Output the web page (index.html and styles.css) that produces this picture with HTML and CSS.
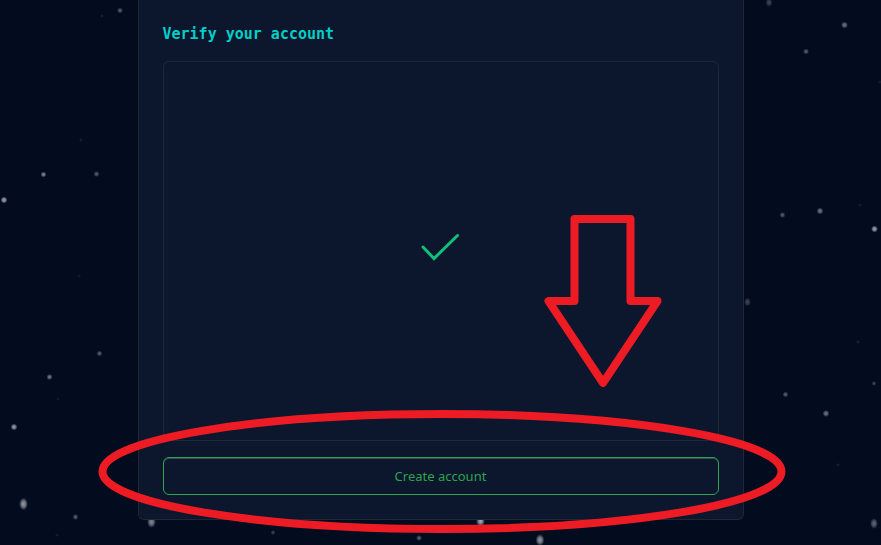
FILE: index.html
```html
<!DOCTYPE html>
<html lang="en">
<head>
<meta charset="utf-8">
<meta name="viewport" content="width=device-width, initial-scale=1">
<title>Verify your account</title>
<link rel="stylesheet" href="styles.css">
</head>
<body>
<main class="stage">
  <svg class="stars" viewBox="0 0 881 545" preserveAspectRatio="xMidYMin slice" aria-hidden="true">
    <defs>
      <radialGradient id="star">
        <stop offset="0" stop-color="#b4b7bd"/>
        <stop offset=".5" stop-color="#a0a4ac" stop-opacity=".75"/>
        <stop offset="1" stop-color="#8a8e98" stop-opacity="0"/>
      </radialGradient>
    </defs>
    <g fill="url(#star)">
      <circle cx="120" cy="10.500" r="3" opacity=".5"/>
      <circle cx="102" cy="16" r="2" opacity=".12"/>
      <circle cx="81" cy="140" r="2" opacity=".15"/>
      <circle cx="43.500" cy="174.500" r="3" opacity=".75"/>
      <circle cx="96.500" cy="174" r="3" opacity=".5"/>
      <circle cx="4" cy="200" r="3.500" opacity=".95"/>
      <circle cx="79" cy="276" r="2" opacity=".12"/>
      <circle cx="99.500" cy="353.500" r="3" opacity=".5"/>
      <circle cx="49.500" cy="377" r="3" opacity=".7"/>
      <circle cx="58" cy="399" r="2" opacity=".1"/>
      <circle cx="14" cy="427" r="3.500" opacity=".9"/>
      <ellipse cx="23.500" cy="504" rx="4.500" ry="6.500" opacity=".85"/>
      <circle cx="75.500" cy="517" r="3" opacity=".5"/>
      <circle cx="57" cy="535" r="2" opacity=".12"/>
      <ellipse cx="151.500" cy="522" rx="4.500" ry="6" opacity=".75"/>
      <circle cx="273" cy="532.500" r="2.500" opacity=".35"/>
      <circle cx="419" cy="538" r="3" opacity=".5"/>
      <ellipse cx="480.500" cy="521" rx="4.500" ry="6" opacity=".95"/>
      <ellipse cx="540" cy="540" rx="4.500" ry="6" opacity=".85"/>
      <ellipse cx="769" cy="2.500" rx="3.500" ry="4.500" opacity=".35"/>
      <circle cx="844.500" cy="25" r="3.500" opacity=".65"/>
      <circle cx="806" cy="51.500" r="3" opacity=".5"/>
      <circle cx="880" cy="82" r="2" opacity=".12"/>
      <circle cx="782.500" cy="215" r="3" opacity=".5"/>
      <circle cx="820" cy="211" r="3.500" opacity=".65"/>
      <circle cx="860" cy="205" r="2" opacity=".12"/>
      <circle cx="874.500" cy="229" r="3.500" opacity=".95"/>
      <ellipse cx="747.500" cy="302" rx="3.500" ry="4.500" opacity=".35"/>
      <circle cx="858" cy="342" r="2" opacity=".15"/>
      <circle cx="874" cy="383.500" r="2.500" opacity=".35"/>
      <circle cx="785.500" cy="394.500" r="3" opacity=".5"/>
      <circle cx="826" cy="413.500" r="3.500" opacity=".65"/>
      <circle cx="838" cy="465" r="2" opacity=".15"/>
      <ellipse cx="874" cy="523.500" rx="4" ry="5.500" opacity=".55"/>
    </g>
  </svg>

  <form class="card">
    <h1 class="title">Verify your account</h1>
    <div class="challenge">
      <svg class="check" viewBox="0 0 40 30" role="img" aria-label="Verified">
        <path d="M2 15 13 26.500 36.500 3.500"/>
      </svg>
    </div>
    <button class="submit" type="button">Create account</button>
  </form>

  <svg class="markup" viewBox="0 0 881 545" aria-hidden="true">
    <path d="M574 219H630V301H657L602.500 383 548 301H574Z"/>
    <ellipse cx="441.500" cy="471.500" rx="339.500" ry="57.500"/>
  </svg>
</main>
</body>
</html>
```

FILE: styles.css
```css
* {
  box-sizing: border-box;
}

body {
  margin: 0;
  background: #030b1e;
  font-family: "Noto Sans", "Open Sans", sans-serif;
}

.stage {
  position: relative;
  min-height: 100vh;
  padding: 0 16px 25px;
  overflow: hidden;
}

.stars {
  position: absolute;
  inset: 0;
  width: 100%;
  height: 100%;
}

.card {
  position: relative;
  display: flex;
  flex-direction: column;
  max-width: 606px;
  margin: 0 auto;
  padding: 24px;
  border: 1px solid #202734;
  border-top: 0;
  border-radius: 0 0 6px 6px;
  background: #0c162d;
}

.title {
  margin: 0 0 17px;
  color: #00cfc8;
  font: bold 15px/20px "DejaVu Sans Mono", monospace;
}

.challenge {
  display: flex;
  align-items: center;
  justify-content: center;
  min-height: 380px;
  margin-bottom: 16px;
  padding-bottom: 8px;
  border: 1px solid #202734;
  border-radius: 6px;
}

.check {
  width: 40px;
  height: 30px;
  fill: none;
  stroke: #0fbf7c;
  stroke-width: 3;
  stroke-linecap: round;
}

.submit {
  height: 38px;
  border: 1px solid #2da44e;
  border-radius: 6px;
  background: transparent;
  box-shadow: inset 0 1px 0 #39475a;
  color: #2da44e;
  font: 13px/20px "Noto Sans", "Open Sans", sans-serif;
  cursor: pointer;
}

.markup {
  position: absolute;
  top: 0;
  left: 50%;
  width: 881px;
  height: 545px;
  transform: translateX(-50%);
  fill: none;
  stroke: #ed1c24;
  stroke-width: 8;
  stroke-linejoin: round;
  pointer-events: none;
}
```
